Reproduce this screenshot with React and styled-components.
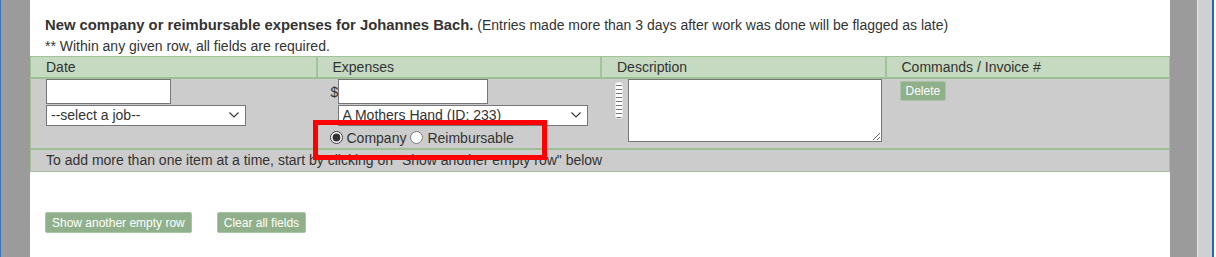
import React from "react";
import styled, { createGlobalStyle } from "styled-components";

const Global = createGlobalStyle`
  html, body { margin: 0; padding: 0; background: #fff; }
  body { font-family: "Liberation Sans", Arial, sans-serif; color: #333; }
`;

const Page = styled.div`
  display: flex;
  height: 257px;
  overflow: hidden;
`;

const LeftGutter = styled.div`
  width: 29px;
  flex: none;
  background: #9b9b9b;
  border-left: 1px solid #3b73b9;
`;

const Main = styled.main`
  width: 1140px;
  flex: none;
  background: #fff;
`;

const RightBar = styled.div`
  width: 27px;
  flex: none;
  background: #9b9b9b;
`;

const RightTrack = styled.div`
  width: 14px;
  flex: none;
  background: #d0d0d0;
  border-left: 1px solid #e6e6e6;
  border-right: 2px solid #1f63c6;
`;

const Intro = styled.div`
  padding: 15px 15px 0;
  font-size: 14px;
  line-height: 21px;
  height: 41px;
`;

const Title = styled.div`
  white-space: nowrap;
  strong {
    font-weight: bold;
    font-size: 14.8px;
  }
`;

const Table = styled.div`
  position: relative;
  display: grid;
  grid-template-columns: repeat(4, 1fr);
  border-left: 1px solid #a2c29a;
  border-right: 1px solid #a2c29a;
`;

const HeadCell = styled.div`
  background: #c5dac1;
  border-top: 1px solid #a2c29a;
  border-bottom: 2px solid #9dbf95;
  border-left: ${(p) => (p.$first ? "0" : "2px solid #a2c29a")};
  height: 20px;
  line-height: 21px;
  font-size: 14px;
  padding-left: 15px;
`;

const BodyCell = styled.div`
  position: relative;
  background: #cccccc;
  height: 69px;
  padding: 0 0 0 15px;
  display: flex;
  flex-direction: ${(p) => (p.$row ? "row" : "column")};
  align-items: flex-start;
`;

const TextInput = styled.input`
  box-sizing: border-box;
  width: ${(p) => p.$w}px;
  height: 25px;
  margin: 0;
  border: 1px solid #767676;
  background: #fff;
  padding: 2px 4px;
  font: 14px "Liberation Sans", Arial, sans-serif;
`;

const SelectWrap = styled.div`
  position: relative;
  width: ${(p) => p.$w}px;
  height: 21px;
  margin-top: 1px;
`;

const Select = styled.select`
  appearance: none;
  box-sizing: border-box;
  width: 100%;
  height: 21px;
  margin: 0;
  border: 1px solid #767676;
  border-radius: 0;
  background: #fff;
  color: #333;
  padding: 0 20px 0 4px;
  font: 14px "Liberation Sans", Arial, sans-serif;
  line-height: 19px;
`;

const Chevron = styled.svg`
  position: absolute;
  right: 7px;
  top: 7px;
  pointer-events: none;
`;

const MoneyRow = styled.div`
  display: flex;
  align-items: flex-start;
`;

const Dollar = styled.span`
  font-size: 14px;
  line-height: 14px;
  margin-top: 6px;
  width: 7px;
`;

const ExpenseFields = styled.div`
  display: flex;
  flex-direction: column;
`;

const RadioRow = styled.div`
  display: flex;
  align-items: center;
  font-size: 14px;
  height: 22px;
  margin: 1px 0 0 -1px;
`;

const RadioLabel = styled.label`
  display: inline-flex;
  align-items: center;
  margin-left: ${(p) => p.$gap || 0}px;
  input {
    margin: 0 4px 0 0;
    width: 13px;
    height: 13px;
    accent-color: #333;
  }
`;

const Highlight = styled.div`
  position: absolute;
  left: -3px;
  top: 41px;
  width: 224px;
  height: 30px;
  border: 5px solid #ff0000;
  z-index: 2;
  pointer-events: none;
`;

const Grip = styled.span`
  display: block;
  width: 6px;
  height: 35px;
  margin: 4px 6px 0 1px;
  border-radius: 2px;
  background: repeating-linear-gradient(
    to bottom,
    #fff 0 2px,
    #777 2px 3px,
    #fff 3px 4px
  );
  box-shadow: 0 0 0 1px #e8e8e8;
`;

const TextArea = styled.textarea`
  box-sizing: border-box;
  width: 254px;
  height: 63px;
  margin: 0;
  border: 1px solid #767676;
  background: #fff;
  font: 14px "Liberation Sans", Arial, sans-serif;
`;

const SmallButton = styled.button`
  box-sizing: border-box;
  height: ${(p) => p.$h || 21}px;
  padding: 0 ${(p) => p.$px || 6}px;
  margin: ${(p) => p.$mt || 0}px 0 0;
  background: #8fb08a;
  color: #fff;
  border: 1px solid #a9c4a4;
  border-radius: 2px;
  font: 12px "Liberation Sans", Arial, sans-serif;
  cursor: pointer;
`;

const InfoRow = styled.div`
  grid-column: 1 / -1;
  background: #cccccc;
  border-top: 2px solid #9dbf95;
  border-bottom: 1px solid #a2c29a;
  height: 21px;
  line-height: 21px;
  font-size: 14px;
  padding-left: 15px;
`;

const ButtonBar = styled.div`
  display: flex;
  gap: 25px;
  padding: 40px 0 0 15px;
`;

const ChevronIcon = () => (
  <Chevron width="10" height="6" viewBox="0 0 10 6">
    <path d="M0.5 0.5 L5 5 L9.5 0.5" fill="none" stroke="#333" strokeWidth="1.1" />
  </Chevron>
);

export default function App() {
  return (
    <>
      <Global />
      <Page>
        <LeftGutter />
        <Main>
          <Intro>
            <Title>
              <strong>New company or reimbursable expenses for Johannes Bach.</strong>{" "}
              (Entries made more than 3 days after work was done will be flagged as late)
            </Title>
            <div>** Within any given row, all fields are required.</div>
          </Intro>
          <Table>
            <HeadCell $first>Date</HeadCell>
            <HeadCell>Expenses</HeadCell>
            <HeadCell>Description</HeadCell>
            <HeadCell>Commands / Invoice #</HeadCell>

            <BodyCell>
              <TextInput $w={125} />
              <SelectWrap $w={200}>
                <Select defaultValue="">
                  <option value="">--select a job--</option>
                </Select>
                <ChevronIcon />
              </SelectWrap>
            </BodyCell>

            <BodyCell>
              <MoneyRow>
                <Dollar>$</Dollar>
                <ExpenseFields>
                  <TextInput $w={150} />
                  <SelectWrap $w={250}>
                    <Select defaultValue="233">
                      <option value="233">A Mothers Hand (ID: 233)</option>
                    </Select>
                    <ChevronIcon />
                  </SelectWrap>
                </ExpenseFields>
              </MoneyRow>
              <RadioRow>
                <RadioLabel>
                  <input type="radio" name="kind" defaultChecked />
                  Company
                </RadioLabel>
                <RadioLabel $gap={4}>
                  <input type="radio" name="kind" />
                  Reimbursable
                </RadioLabel>
              </RadioRow>
              <Highlight />
            </BodyCell>

            <BodyCell $row>
              <Grip />
              <TextArea />
            </BodyCell>

            <BodyCell>
              <SmallButton $h={20} $px={5} $mt={2}>Delete</SmallButton>
            </BodyCell>

            <InfoRow>
              To add more than one item at a time, start by clicking on "Show another empty row" below
            </InfoRow>
          </Table>
          <ButtonBar>
            <SmallButton>Show another empty row</SmallButton>
            <SmallButton>Clear all fields</SmallButton>
          </ButtonBar>
        </Main>
        <RightBar />
        <RightTrack />
      </Page>
    </>
  );
}
